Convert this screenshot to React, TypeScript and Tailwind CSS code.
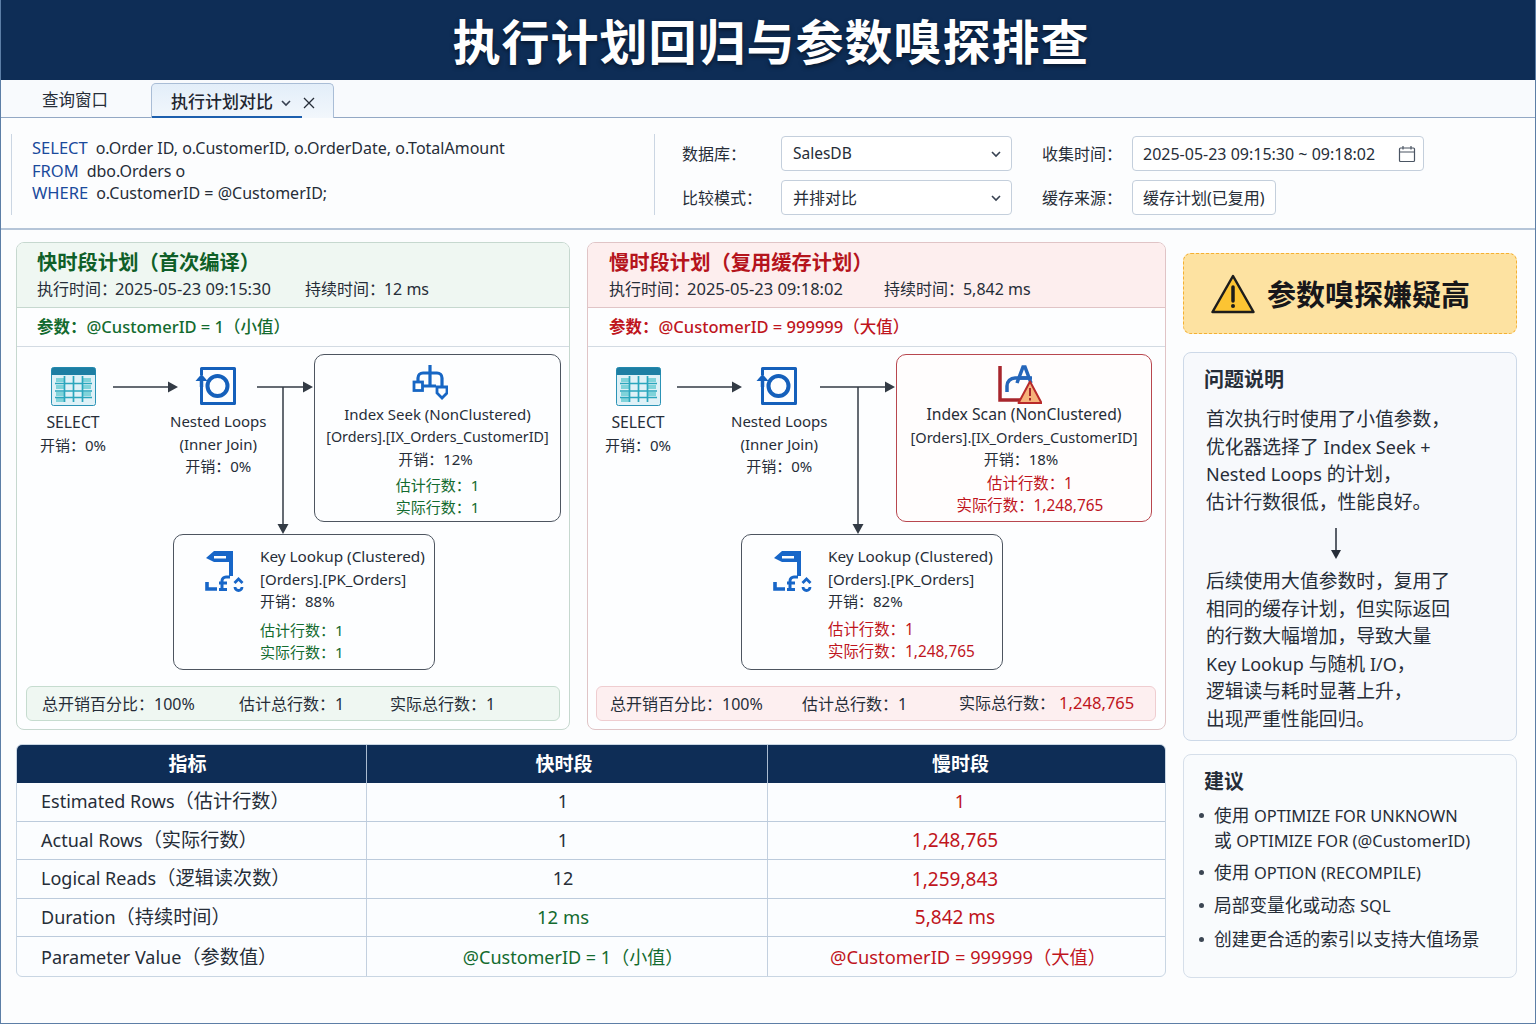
import React from "react";

const F = "font-['Noto_Sans','Noto_Sans_CJK_SC',sans-serif]";

function TableIcon({ className }: { className: string }) {
  return (
    <svg viewBox="0 0 45 39" className={className}>
      <rect x="0.5" y="0.5" width="44" height="38" rx="2" fill="#dff1f7" stroke="#2b93b6" />
      <path d="M0.5 3 a2.5 2.5 0 0 1 2.500 -2.500 h39 a2.500 2.500 0 0 1 2.500 2.500 v5 h-44z" fill="#1d7ea3" />
      <path d="M5 13h8M5 20h8M5 27h8M5 33h8M32 13h8M32 20h8M32 27h8" stroke="#7fd3da" strokeWidth="4" fill="none" />
      <path d="M13.500 9v26M22.500 9v26M31.500 9v26M4 16.500h37M4 24h37M4 30.500h37" stroke="#2ba6bd" strokeWidth="1.700" fill="none" />
    </svg>
  );
}
function LoopIcon({ className }: { className: string }) {
  return (
    <svg viewBox="0 0 41 40" className={className} fill="none">
      <path d="M6.500 9V2.500h33v35h-33V18" stroke="#1560bb" strokeWidth="3" strokeLinejoin="round" />
      <circle cx="22.500" cy="20" r="10" stroke="#1560bb" strokeWidth="4" />
      <path d="M6.500 21V12" stroke="#1560bb" strokeWidth="3.500" />
      <path d="M0.500 15l6-7 6 7z" fill="#1560bb" />
    </svg>
  );
}
function SeekIcon({ className }: { className: string }) {
  return (
    <svg viewBox="0 0 36 35" className={className} fill="none" stroke="#1766c4" strokeWidth="3.200">
      <path d="M18 0v20M11 21h13" />
      <path d="M6 17v-4a5 5 0 0 1 5-5h14a5 5 0 0 1 5 5v8" />
      <rect x="2" y="17" width="8.500" height="8.500" strokeWidth="2.800" />
      <path d="M25 22h10v6l-5 5-5-5z" strokeWidth="2.800" />
    </svg>
  );
}
function ScanIcon({ className }: { className: string }) {
  return (
    <svg viewBox="0 0 44 40" className={className} fill="none">
      <path d="M2 1v34h25" stroke="#a8262d" strokeWidth="3.500" />
      <path d="M9 27v-6a8 8 0 0 1 8-8h17" stroke="#2566ba" strokeWidth="3.500" />
      <path d="M19 18L25 2h2l6 16M21 13h11" stroke="#2566ba" strokeWidth="3.500" />
      <path d="M32 16.500L43.500 38h-23z" fill="#f6b27a" stroke="#b92a2a" strokeWidth="2" strokeLinejoin="round" />
      <path d="M32 23v8M32 33v2.500" stroke="#a8262d" strokeWidth="2" />
    </svg>
  );
}
function LookupIcon({ className }: { className: string }) {
  return (
    <svg viewBox="0 0 39 42" className={className} fill="none" stroke="#1766c8">
      <path fillRule="evenodd" d="M1 8L9 1H28V26H24V12H9zM9 6.500V8.500H21V6H9z" fill="#1766c8" stroke="none" />
      <path d="M2 32v7h10" strokeWidth="3.600" />
      <path d="M14 39.500h8M17 39V31a4 4 0 0 1 4-4h4M14 33h8" strokeWidth="3" />
      <path d="M29.500 33l4-4 4 4M30 37a3.500 3.500 0 0 0 7 0" strokeWidth="2.800" />
    </svg>
  );
}
function WarnIcon({ className }: { className: string }) {
  return (
    <svg viewBox="0 0 44 40" className={className}>
      <path d="M22 2L42.500 38h-41z" fill="#fcc433" stroke="#1c1c1c" strokeWidth="2.500" strokeLinejoin="round" />
      <path d="M22 13v14" stroke="#1c1c1c" strokeWidth="3.500" strokeLinecap="round" />
      <circle cx="22" cy="32" r="2" fill="#1c1c1c" />
    </svg>
  );
}
function Chevron({ className }: { className: string }) {
  return (
    <svg viewBox="0 0 12 8" className={className} fill="none" stroke="#374151" strokeWidth="1.600">
      <path d="M2 2l4 4 4-4" />
    </svg>
  );
}

function Op({ icon, lines, className }: { icon: React.ReactNode; lines: React.ReactNode[]; className: string }) {
  return (
    <div className={`absolute flex flex-col items-center text-[15px] text-[#262d38] ${className}`}>
      {icon}
      <div className="mt-[4px] text-center leading-[22.500px]">
        {lines.map((l, i) => (
          <div key={i} className="whitespace-nowrap">{l}</div>
        ))}
      </div>
    </div>
  );
}

function Rows({ tone, actual }: { tone: string; actual: string }) {
  return (
    <div className={`leading-[22px] ${tone}`}>
      <div className="whitespace-nowrap">估计行数：1</div>
      <div className="whitespace-nowrap">实际行数：{actual}</div>
    </div>
  );
}

function Arrows({ d, heads }: { d: string; heads: string }) {
  return (
    <svg viewBox="0 0 580 334" className="absolute left-0 top-0 w-[580px] h-[334px] pointer-events-none" fill="none">
      <path d={d} stroke="#333b45" strokeWidth="1.500" />
      <path d={heads} fill="#333b45" />
    </svg>
  );
}

const selectLines = [<span className="block mt-[1px] text-[15.800px]">SELECT</span>, "开销：0%"];

function FastDiagram() {
  const tone = "text-[#136b2f]";
  return (
    <div className="relative h-[334px] -ml-px">
      <Op className="left-[24px] top-[20px]" icon={<TableIcon className="w-[45px] h-[39px]" />} lines={selectLines} />
      <Op className="left-[154px] top-[19px]" icon={<LoopIcon className="w-[41px] h-[40px] mr-[6px]" />} lines={["Nested Loops", "(Inner Join)", "开销：0%"]} />
      <Arrows
        d="M97 40H155M241 40H291M267 40V180"
        heads="M152 34.500L162 40L152 45.500zM287 34.500L297 40L287 45.500zM261.500 177L267 187L272.500 177z"
      />
      <div className="absolute left-[298px] top-[7px] w-[247px] h-[168px] rounded-[10px] border border-[#4d5560] bg-[#fdfeff] flex flex-col items-center pt-[10px] text-[15px] text-[#262d38]">
        <SeekIcon className="w-[36px] h-[35px] mb-[3px] mr-[16px]" />
        <div className="text-center leading-[22.500px]">
          <div className="whitespace-nowrap">Index Seek (NonClustered)</div>
          <div className="whitespace-nowrap text-[14.300px]">[Orders].[IX_Orders_CustomerID]</div>
          <div className="pr-[4px]">开销：12%</div>
        </div>
        <div className="mt-[3px]"><Rows tone={tone} actual="1" /></div>
      </div>
      <div className="absolute left-[157px] top-[187px] w-[262px] h-[136px] rounded-[10px] border border-[#4d5560] bg-[#fdfeff] flex text-[15px] text-[#262d38] pt-[10px]">
        <div className="w-[86px] pl-[31px] pt-[5px] shrink-0"><LookupIcon className="w-[39px] h-[42px]" /></div>
        <div>
          <div className="leading-[22.500px]">
            <div className="whitespace-nowrap text-[15.300px]">Key Lookup (Clustered)</div>
            <div className="whitespace-nowrap">[Orders].[PK_Orders]</div>
            <div>开销：88%</div>
          </div>
          <div className="mt-[6px]"><Rows tone={tone} actual="1" /></div>
        </div>
      </div>
    </div>
  );
}

function SlowDiagram() {
  const tone = "text-[#bf151d] text-[15.400px]";
  return (
    <div className="relative h-[334px] -ml-px">
      <Op className="left-[18px] top-[20px]" icon={<TableIcon className="w-[45px] h-[39px]" />} lines={selectLines} />
      <Op className="left-[144px] top-[19px]" icon={<LoopIcon className="w-[41px] h-[40px] mr-[5px]" />} lines={["Nested Loops", "(Inner Join)", "开销：0%"]} />
      <Arrows
        d="M90 40H148M233 40H302M271 40V180"
        heads="M145 34.500L155 40L145 45.500zM298 34.500L308 40L298 45.500zM265.500 177L271 187L276.500 177z"
      />
      <div className="absolute left-[309px] top-[7px] w-[256px] h-[168px] rounded-[10px] border border-[#b8474f] bg-[#fffdfd] flex flex-col items-center pt-[10px] text-[15px] text-[#262d38]">
        <ScanIcon className="w-[44px] h-[40px] -mb-[2px] mr-[8px]" />
        <div className="text-center leading-[22.500px]">
          <div className="whitespace-nowrap text-[15.700px]">Index Scan (NonClustered)</div>
          <div className="whitespace-nowrap text-[14.600px]">[Orders].[IX_Orders_CustomerID]</div>
          <div className="pr-[6px]">开销：18%</div>
        </div>
        <div className={`mt-[2px] text-center ml-[12px] ${tone}`}><div className="leading-[22px]">估计行数：1</div><div className="leading-[22px]">实际行数：1,248,765</div></div>
      </div>
      <div className="absolute left-[154px] top-[187px] w-[262px] h-[136px] rounded-[10px] border border-[#4d5560] bg-[#fdfeff] flex text-[15px] text-[#262d38] pt-[10px]">
        <div className="w-[86px] pl-[31px] pt-[5px] shrink-0"><LookupIcon className="w-[39px] h-[42px]" /></div>
        <div>
          <div className="leading-[22.500px]">
            <div className="whitespace-nowrap text-[15.300px]">Key Lookup (Clustered)</div>
            <div className="whitespace-nowrap">[Orders].[PK_Orders]</div>
            <div>开销：82%</div>
          </div>
          <div className="mt-[6px]"><Rows tone={tone} actual="1,248,765" /></div>
        </div>
      </div>
    </div>
  );
}

function Panel({
  className, headClass, titleClass, title, time, dur, durClass, param, paramClass, diagram, barClass, children,
}: {
  className: string; headClass: string; titleClass: string; title: string; time: string; dur: string; durClass: string;
  param: string; paramClass: string; diagram: React.ReactNode; barClass: string; children: React.ReactNode;
}) {
  return (
    <section className={`rounded-[8px] border overflow-hidden bg-[#fdfeff] h-[488px] flex flex-col ${className}`}>
      <div className={`h-[65px] border-b pt-[5px] shrink-0 ${headClass}`}>
        <div className={`text-[20.300px] font-bold leading-[28px] ${titleClass}`}>{title}</div>
        <div className="flex text-[16px] leading-[24px] text-[#262d38] mt-[1px]">
          <span className="whitespace-nowrap">执行时间：<span className="-ml-[2px] text-[16.500px]">{time}</span></span>
          <span className={`whitespace-nowrap ${durClass}`}>持续时间：<span className="-ml-px">{dur}</span></span>
        </div>
      </div>
      <div className={`h-[39px] border-b border-[#d3dbe3] flex items-center text-[16.500px] shrink-0 ${paramClass}`}>
        <b className="font-bold">参数：</b><span className="font-medium">{param}</span>
      </div>
      {diagram}
      <div className={`mt-[5px] h-[35px] rounded-[6px] border flex items-center text-[16px] text-[#262d38] ${barClass}`}>
        {children}
      </div>
    </section>
  );
}

const rows = [
  { a: "Estimated Rows", z: "（估计行数）", b: "1", c: "1", bc: "text-[#262d38] pr-[8px]", cc: "pr-[13px]" },
  { a: "Actual Rows", z: "（实际行数）", b: "1", c: "1,248,765", bc: "text-[#262d38] pr-[8px]", cc: "pr-[23px] text-[19px]" },
  { a: "Logical Reads", z: "（逻辑读次数）", b: "12", c: "1,259,843", bc: "text-[#262d38] pr-[8px]", cc: "pr-[23px] text-[19px]" },
  { a: "Duration", z: "（持续时间）", b: "12 ms", c: "5,842 ms", bc: "text-[#136b2f] pr-[8px] text-[18.500px]", cc: "pr-[23px] text-[19px]" },
  { a: "Parameter Value", z: "（参数值）", b: "@CustomerID = 1（小值）", c: "@CustomerID = 999999（大值）", bc: "text-[#136b2f] pl-[12px]", cc: "pl-[3px] text-[18.300px]" },
];

function CompareTable() {
  return (
    <div className="mt-[14px] h-[233px] rounded-[6px] border border-[#c9d6e3] overflow-hidden bg-[#fbfdff] text-[18px]">
      <div className="grid grid-cols-[350px_401px_1fr] h-[38px] bg-[#0e2d56] text-white font-bold text-[19px] text-center">
        <div className="flex items-center justify-center border-r border-[#a9bbd0] pr-[8px]">指标</div>
        <div className="flex items-center justify-center border-r border-[#a9bbd0] pr-[6px]">快时段</div>
        <div className="flex items-center justify-center pr-[12px]">慢时段</div>
      </div>
      {rows.map((r, i) => (
        <div key={r.a} className={`grid grid-cols-[350px_401px_1fr] ${i === 4 ? "h-[41px] pb-[1px]" : "h-[38.500px] border-b border-[#bccbdc]"}`}>
          <div className="flex items-center pl-[24px] border-r border-[#c3d0df] text-[#262d38] whitespace-nowrap">{r.a}<span className="text-[19.200px]">{r.z}</span></div>
          <div className={`flex items-center justify-center border-r border-[#c3d0df] ${r.bc}`}>{r.b}</div>
          <div className={`flex items-center justify-center text-[#c0151d] ${r.cc}`}>{r.c}</div>
        </div>
      ))}
    </div>
  );
}

function L({ children, className = "text-[18px]" }: { children: React.ReactNode; className?: string }) {
  return <span className={className}>{children}</span>;
}

const li = "relative pl-[10px] leading-[25px] before:content-[''] before:absolute before:left-[-5px] before:top-[10px] before:w-[5px] before:h-[5px] before:rounded-full before:bg-[#3c4653]";
const lt = "text-[16.400px]";
const kw = "text-[#1a4a9c] text-[16.500px] mr-[8px]";

export default function App() {
  return (
    <div className={`w-[1536px] h-[1024px] bg-[#fcfdfe] border-x border-b border-[#5c7ea6] flex flex-col overflow-hidden ${F}`}>
      <header className="h-[80px] shrink-0 bg-[#0e2d56] flex items-center justify-center pl-[6px] pt-[4px]">
        <h1 className="text-[48px] leading-none font-bold tracking-[1px] text-white [text-shadow:0_2px_4px_rgba(0,0,0,0.5)]">执行计划回归与参数嗅探排查</h1>
      </header>

      <nav className="h-[38px] shrink-0 border-b border-[#93a8c4] bg-[#f8fafd] flex items-end relative">
        <div className="w-[150px] h-[37px] pl-[41px] flex items-center text-[16.500px] text-[#262d38] pt-[3px]">查询窗口</div>
        <div className="relative w-[183px] h-[35px] -mb-px rounded-t-[5px] border border-b-0 border-[#a9bdd6] bg-[linear-gradient(#e3eef9,#f2f7fc)] flex items-center pl-[19px] text-[17px] font-medium text-[#1f2630]">
          <span className="pt-[2px]">执行计划对比</span>
          <Chevron className="w-[12px] h-[8px] ml-[7px] mt-[3px]" />
          <svg viewBox="0 0 12 12" className="w-[12px] h-[12px] ml-[11px] mt-[4px]" stroke="#262d38" strokeWidth="1.300"><path d="M1 1l10 10M11 1L1 11" /></svg>
          <span className="absolute left-0 bottom-0 w-[150px] h-[2px] bg-[#1c5fae]" />
        </div>
      </nav>

      <div className="h-[112px] shrink-0 border-b-2 border-[#b5c5d8] flex items-center bg-[#fcfdfe]">
        <div className="ml-[10px] mt-[2px] h-[81px] w-[644px] border-l border-r border-[#cbd6e3] pl-[20px] pb-[6px] flex flex-col justify-center text-[16px] leading-[22.500px] text-[#262d38]">
          <div className="whitespace-nowrap"><span className={kw}>SELECT</span>o.Order ID, o.CustomerID, o.OrderDate, o.TotalAmount</div>
          <div className="whitespace-nowrap"><span className={kw}>FROM</span>dbo.Orders o</div>
          <div className="whitespace-nowrap"><span className={kw}>WHERE</span>o.CustomerID = @CustomerID;</div>
        </div>
        <div className="ml-[27px] mt-[5px] flex flex-col gap-[9px] text-[16px] text-[#262d38]">
          <div className="flex items-center h-[35px]">
            <span className="w-[99px] whitespace-nowrap">数据库：</span>
            <div className="w-[231px] h-[35px] rounded-[4px] border border-[#c4cfdc] bg-white flex items-center justify-between pl-[11px] pr-[9px] text-[15.500px]">SalesDB<Chevron className="w-[12px] h-[8px]" /></div>
            <span className="ml-[30px] w-[90px] whitespace-nowrap">收集时间：</span>
            <div className="w-[292px] h-[35px] rounded-[4px] border border-[#c4cfdc] bg-white flex items-center justify-between pl-[10px] pr-[7px] whitespace-nowrap">
              2025-05-23 09:15:30 ~ 09:18:02
              <svg viewBox="0 0 18 18" className="w-[18px] h-[18px]" fill="none" stroke="#4b5563" strokeWidth="1.200"><rect x="1.500" y="3" width="15" height="13.500" rx="1" /><path d="M1.500 7h15M5 1v3.500M13 1v3.500" /></svg>
            </div>
          </div>
          <div className="flex items-center h-[35px]">
            <span className="w-[99px] whitespace-nowrap">比较模式：</span>
            <div className="w-[231px] h-[35px] rounded-[4px] border border-[#c4cfdc] bg-white flex items-center justify-between pl-[11px] pr-[9px]">并排对比<Chevron className="w-[12px] h-[8px]" /></div>
            <span className="ml-[30px] w-[90px] whitespace-nowrap">缓存来源：</span>
            <div className="w-[144px] h-[35px] rounded-[4px] border border-[#c4cfdc] bg-white flex items-center pl-[10px] whitespace-nowrap">缓存计划(已复用)</div>
          </div>
        </div>
      </div>

      <main className="flex pl-[15px] pt-[12px]">
        <div className="w-[1150px] shrink-0">
          <div className="flex gap-[17px]">
            <Panel
              className="w-[554px] border-[#c6d8cf] [&>div:nth-child(1)]:px-[20px] [&>div:nth-child(2)]:px-[20px] [&>div:last-child]:mx-[9px]"
              headClass="bg-[#eff7f2] border-[#c6d8cf]"
              titleClass="text-[#0f5f28]"
              title="快时段计划（首次编译）"
              time="2025-05-23 09:15:30"
              dur="12 ms"
              durClass="ml-[34px]"
              param="@CustomerID = 1（小值）"
              paramClass="text-[#136b2f]"
              diagram={<FastDiagram />}
              barClass="bg-[#eff7f2] border-[#c6dccf]"
            >
              <span className="ml-[15px] w-[197px] whitespace-nowrap">总开销百分比：100%</span>
              <span className="w-[151px] whitespace-nowrap">估计总行数：1</span>
              <span className="whitespace-nowrap">实际总行数：1</span>
            </Panel>
            <Panel
              className="w-[579px] border-[#e0c4c6] [&>div:nth-child(1)]:px-[21px] [&>div:nth-child(2)]:px-[21px] [&>div:last-child]:ml-[8px] [&>div:last-child]:mr-[9px]"
              headClass="bg-[#fdeeee] border-[#e0c4c6]"
              titleClass="text-[#b5141c]"
              title="慢时段计划（复用缓存计划）"
              time="2025-05-23 09:18:02"
              dur="5,842 ms"
              durClass="ml-[41px]"
              param="@CustomerID = 999999（大值）"
              paramClass="text-[#bf151d]"
              diagram={<SlowDiagram />}
              barClass="bg-[#fdeff0] border-[#efcdd0]"
            >
              <span className="ml-[13px] w-[192px] whitespace-nowrap">总开销百分比：100%</span>
              <span className="w-[157px] whitespace-nowrap">估计总行数：1</span>
              <span className="whitespace-nowrap">实际总行数：<span className="text-[#bf151d] ml-[4px] text-[16.600px]">1,248,765</span></span>
            </Panel>
          </div>
          <CompareTable />
        </div>

        <aside className="ml-[17px] w-[334px] shrink-0 pt-[11px] flex flex-col">
          <div className="h-[81px] rounded-[8px] border border-dashed border-[#f5b032] bg-[#fde2a1] flex items-center pl-[27px]">
            <WarnIcon className="w-[44px] h-[40px]" />
            <span className="ml-[12px] pt-[3px] text-[29px] font-bold text-[#17171a] whitespace-nowrap">参数嗅探嫌疑高</span>
          </div>
          <div className="mt-[18px] h-[389px] rounded-[8px] border border-[#cdd9e8] bg-[#f7f9fc] pl-[20px] pt-[13px] text-[#262d38]">
            <h2 className="text-[20px] font-bold leading-[28px]">问题说明</h2>
            <div className="ml-[2px] mt-[12px] text-[18.800px] leading-[27.500px] whitespace-nowrap">
              <p>首次执行时使用了小值参数，</p>
              <p>优化器选择了 <L>Index Seek +</L></p>
              <p><L>Nested Loops</L> 的计划，</p>
              <p>估计行数很低，性能良好。</p>
            </div>
            <svg viewBox="0 0 14 32" className="w-[14px] h-[32px] ml-[125px] mt-[12px] mb-[8px]" fill="none">
              <path d="M7 0v26" stroke="#262d38" strokeWidth="1.500" />
              <path d="M2 22l5 9 5-9z" fill="#262d38" />
            </svg>
            <div className="ml-[2px] text-[18.800px] leading-[27.500px] whitespace-nowrap">
              <p>后续使用大值参数时，复用了</p>
              <p>相同的缓存计划，但实际返回</p>
              <p>的行数大幅增加，导致大量</p>
              <p><L>Key Lookup</L> 与随机 <L>I/O</L>，</p>
              <p>逻辑读与耗时显著上升，</p>
              <p>出现严重性能回归。</p>
            </div>
          </div>
          <div className="mt-[13px] h-[224px] rounded-[8px] border border-[#d6dfea] bg-[#f9fbfd] pl-[20px] pt-[13px] text-[#262d38]">
            <h2 className="text-[20px] font-bold leading-[28px]">建议</h2>
            <ul className="mt-[7px] text-[17.700px] whitespace-nowrap">
              <li className={li}>使用 <L className={lt}>OPTIMIZE FOR UNKNOWN</L><br />或 <L className={lt}>OPTIMIZE FOR (@CustomerID)</L></li>
              <li className={`mt-[7px] ${li}`}>使用 <L className={lt}>OPTION (RECOMPILE)</L></li>
              <li className={`mt-[8px] ${li}`}>局部变量化或动态 <L className={lt}>SQL</L></li>
              <li className={`mt-[9px] ${li}`}>创建更合适的索引以支持大值场景</li>
            </ul>
          </div>
        </aside>
      </main>
    </div>
  );
}
